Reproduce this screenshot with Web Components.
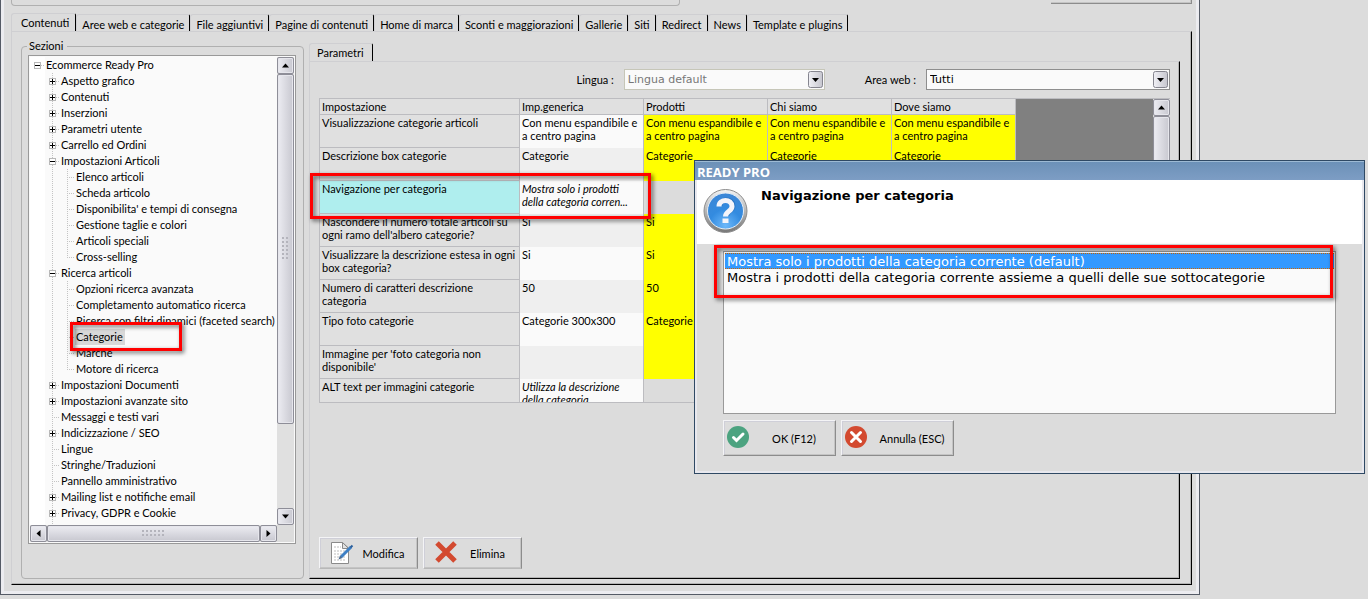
<!DOCTYPE html>
<html lang="it">
<head>
<meta charset="utf-8">
<title>Ready Pro</title>
<style>
html, body {
  margin: 0;
  height: 100%;
}
body {
  --face: #dcdcdc;
  --paper: #fafafa;
  --line: #999;
  --ui: Lato, "Noto Sans", sans-serif;
  --wide: "DejaVu Sans", sans-serif;
  background: var(--face);
  color: #000;
  font: 11px/16px var(--ui);
  overflow: hidden;
}
</style>
</head>
<body>
<ready-desktop></ready-desktop>
<script>
;(function(){
'use strict'

class BaseElement extends HTMLElement {
  constructor(){super()
    const t = document.createElement('template')
    t.innerHTML = '<style>*{box-sizing:border-box}</style>' + this.constructor.tpl
    this.attachShadow({mode: 'open'}).appendChild(t.content)
  }
  $(s){
    return this.shadowRoot.querySelector(s)
  }
}

/* scroll bar: vertical unless it has the horizontal attribute, --thumb is the thumb's length */
class ScrollBar extends BaseElement {
  static tpl = `
<style>
:host {
  display: flex;
  flex-direction: column;
  width: 17px;
  background: #e0e0e0;
}
:host([horizontal]) {
  flex-direction: row;
  width: auto;
  height: 17px;
}
button, .thumb {
  border: 1px solid #8e8e98;
  border-radius: 2px;
  background: linear-gradient(90deg, #ececf2, #c8c8d0);
  box-shadow: inset 0 0 0 1px #e6e6ec;
}
:host([horizontal]) button, :host([horizontal]) .thumb {
  background: linear-gradient(#ececf2, #c8c8d0);
}
button {
  flex: none;
  width: 17px;
  height: 17px;
  padding: 0;
  display: grid;
  place-items: center;
}
button svg {
  width: 7px;
  height: 7px;
}
.end svg {
  transform: rotate(180deg);
}
:host([horizontal]) .start svg {
  transform: rotate(-90deg);
}
:host([horizontal]) .end svg {
  transform: rotate(90deg);
}
.thumb {
  flex: 0 0 var(--thumb, 60%);
  display: grid;
  place-items: center;
}
.grip {
  width: 8px;
  height: 24px;
  background: radial-gradient(circle at 1px 1px, #b4b4bc 1px, #0000 1px) 0 0 / 4px 4px;
}
:host([horizontal]) .grip {
  width: 24px;
  height: 8px;
}
.track {
  flex: 1;
}
</style>
<button class="start" tabindex="-1" aria-label="Indietro"><svg viewBox="0 0 7 7"><path d="M3.5 1.5 7 5.5H0z"/></svg></button>
<div class="thumb"><div class="grip"></div></div>
<div class="track"></div>
<button class="end" tabindex="-1" aria-label="Avanti"><svg viewBox="0 0 7 7"><path d="M3.5 1.5 7 5.5H0z"/></svg></button>
`
}
customElements.define('scroll-bar', ScrollBar)

/* bevelled button with the icon in slot=icon */
class PushButton extends BaseElement {
  static tpl = `
<style>
:host {
  display: block;
}
button {
  display: flex;
  align-items: center;
  width: 100%;
  height: 100%;
  padding: 0 4px 0 10px;
  font: inherit;
  color: inherit;
  background: var(--face);
  border: 1px solid;
  border-color: #f4f4f6 #8c8c8c #b8b8b8 #f4f4f6;
  box-shadow: inset -1px -1px #c4c4c4, inset 1px 1px #cfcfd8;
}
.text {
  flex: 1;
  padding-top: 2px;
  text-align: center;
}
:host([raised]) button {
  padding: 0 4px 3px 3px;
  border-bottom-color: #8c8c8c;
}
:host([raised]) .text {
  padding: 4px 0 0 8px;
}
</style>
<button type="button"><slot name="icon"></slot><span class="text"><slot></slot></span></button>
`
}
customElements.define('push-button', PushButton)

class ComboBox extends BaseElement {
  static tpl = `
<style>
:host {
  display: flex;
  align-items: center;
  gap: 10px;
}
.box {
  display: grid;
  grid-template-columns: 1fr 16px;
  align-items: center;
  width: var(--box);
  height: 21px;
  border: 1px solid #8e8e8e;
  background: var(--paper);
}
select {
  grid-area: 1 / 1 / 2 / 3;
  appearance: none;
  width: 100%;
  height: 19px;
  padding: 1px 20px 0 3px;
  border: 0;
  background: none;
  font: 11px/16px var(--wide);
  color: #000;
  opacity: 1;
}
.arrow {
  grid-area: 1 / 2 / 2 / 3;
  width: 16px;
  height: 17px;
  pointer-events: none;
}
:host([disabled]) .box {
  border-color: #c6c6b8;
}
:host([disabled]) select {
  color: #777;
}
</style>
<label for="sel"></label>
<div class="box">
  <select id="sel"></select>
  <svg class="arrow" viewBox="0 0 16 17">
    <defs><linearGradient id="g" x2="1"><stop stop-color="#f0f0f5"/><stop offset="1" stop-color="#c6c6ce"/></linearGradient></defs>
    <rect x=".5" y=".5" width="14" height="16" rx="2" fill="url(#g)" stroke="#85858f"/>
    <path d="M4 7h7l-3.500 4z"/>
  </svg>
</div>
`
  connectedCallback(){
    this.$('label').textContent = this.getAttribute('label')
    const s = this.$('select')
    s.disabled = this.hasAttribute('disabled')
    s.appendChild(new Option(this.getAttribute('value')))
  }
}
customElements.define('combo-box', ComboBox)

class TabStrip extends BaseElement {
  static tpl = `
<style>
:host {
  display: flex;
  align-items: flex-end;
}
button {
  flex: none;
  height: 17px;
  margin: 0;
  padding: 2px 5px 0;
  border: 1px solid #cfcfd2;
  border-right-color: #000;
  border-bottom: 0;
  border-radius: 3px 2px 0 0;
  background: var(--face);
  font: inherit;
  color: inherit;
  white-space: nowrap;
}
button[aria-selected=true] {
  height: 19px;
  margin-bottom: -1px;
  padding: 0 6px 0 9px;
}
:host([single]) button[aria-selected=true] {
  padding: 0 8px 0 7px;
}
</style>
`
  connectedCallback(){
    this.setAttribute('role', 'tablist')
    this.getAttribute('tabs').split('|').forEach((name, i)=>{
      const b = document.createElement('button')
      b.setAttribute('role', 'tab')
      b.setAttribute('aria-selected', i == 0)
      b.textContent = name
      b.onclick = ()=>{
        this.$('[aria-selected=true]').setAttribute('aria-selected', false)
        b.setAttribute('aria-selected', true)
      }
      this.shadowRoot.appendChild(b)
    })
  }
}
customElements.define('tab-strip', TabStrip)

/* one row of the tree, its children go in the default slot */
class TreeItem extends BaseElement {
  static tpl = `
<style>
:host {
  display: block;
  background: repeating-linear-gradient(#c4c4c4 0 1px, #0000 1px 2px) 3px 0 / 1px 100% no-repeat;
}
:host(:last-child) {
  background-size: 1px 8px;
}
:host([root]) {
  background: none;
}
.row {
  display: flex;
  align-items: center;
  height: 16px;
  background: repeating-linear-gradient(90deg, #c4c4c4 0 1px, #0000 1px 2px) 3px 8px / 8px 1px no-repeat;
}
button {
  flex: none;
  width: 7px;
  height: 7px;
  padding: 0;
  border: 0;
  background: none;
}
svg {
  display: block;
}
.text {
  margin-left: 4px;
  padding: 0 2px 0 1px;
  white-space: nowrap;
}
:host([selected]) .text {
  background: #d8d8d8;
}
.children {
  margin-left: 15px;
}
:host(:not([toggle])) svg, :host([open]) .plus {
  display: none;
}
:host([toggle]:not([open])) .children {
  display: none;
}
</style>
<div class="row">
  <button tabindex="-1" aria-label="Espandi"><svg width="7" height="7" viewBox="0 0 7 7" shape-rendering="crispEdges">
    <path fill="#fff" stroke="#b8b8b8" d="M.5.5h6v6h-6z"/><path d="M1 3h5v1H1z"/><path class="plus" d="M3 1h1v5H3z"/>
  </svg></button>
  <span class="text"></span>
</div>
<div class="children"><slot></slot></div>
`
  connectedCallback(){
    this.$('.text').textContent = this.getAttribute('label')
    this.$('button').onclick = ()=>this.toggleAttribute('open')
  }
}
customElements.define('tree-item', TreeItem)

class SectionTree extends BaseElement {
  static tpl = `
<style>
:host {
  display: flex;
  min-height: 0;
}
fieldset {
  flex: 1;
  display: flex;
  min-width: 0;
  margin: 0;
  padding: 2px 7px 34px 6px;
  border: 1px solid #b0b0b0;
  border-radius: 4px;
}
legend {
  margin-left: -1px;
  padding: 0 4px 0 2px;
  line-height: 14px;
}
.list {
  flex: 1;
  display: grid;
  grid-template: minmax(0, 1fr) 17px / minmax(0, 1fr) 17px;
  padding: 1px;
  border: 1px solid var(--line);
  background: var(--paper);
}
.view {
  overflow: hidden;
  padding-left: 4px;
  background: linear-gradient(90deg, #fff 15px, var(--paper) 15px);
}
.v {
  --thumb: 350px;
}
.h {
  --thumb: 213px;
}
.corner {
  background: var(--face);
}
</style>
<fieldset>
  <legend>Sezioni</legend>
  <div class="list">
    <div class="view">
      <tree-item root toggle open label="Ecommerce Ready Pro">
        <tree-item toggle label="Aspetto grafico"></tree-item>
        <tree-item toggle label="Contenuti"></tree-item>
        <tree-item toggle label="Inserzioni"></tree-item>
        <tree-item toggle label="Parametri utente"></tree-item>
        <tree-item toggle label="Carrello ed Ordini"></tree-item>
        <tree-item toggle open label="Impostazioni Articoli">
          <tree-item label="Elenco articoli"></tree-item>
          <tree-item label="Scheda articolo"></tree-item>
          <tree-item label="Disponibilita' e tempi di consegna"></tree-item>
          <tree-item label="Gestione taglie e colori"></tree-item>
          <tree-item label="Articoli speciali"></tree-item>
          <tree-item label="Cross-selling"></tree-item>
        </tree-item>
        <tree-item toggle open label="Ricerca articoli">
          <tree-item label="Opzioni ricerca avanzata"></tree-item>
          <tree-item label="Completamento automatico ricerca"></tree-item>
          <tree-item label="Ricerca con filtri dinamici (faceted search)"></tree-item>
          <tree-item selected label="Categorie"></tree-item>
          <tree-item label="Marche"></tree-item>
          <tree-item label="Motore di ricerca"></tree-item>
        </tree-item>
        <tree-item toggle label="Impostazioni Documenti"></tree-item>
        <tree-item toggle label="Impostazioni avanzate sito"></tree-item>
        <tree-item label="Messaggi e testi vari"></tree-item>
        <tree-item toggle label="Indicizzazione / SEO"></tree-item>
        <tree-item label="Lingue"></tree-item>
        <tree-item label="Stringhe/Traduzioni"></tree-item>
        <tree-item label="Pannello amministrativo"></tree-item>
        <tree-item toggle label="Mailing list e notifiche email"></tree-item>
        <tree-item toggle label="Privacy, GDPR e Cookie"></tree-item>
        <tree-item></tree-item>
      </tree-item>
    </div>
    <scroll-bar class="v"></scroll-bar>
    <scroll-bar class="h" horizontal></scroll-bar>
    <div class="corner"></div>
  </div>
</fieldset>
`
}
customElements.define('section-tree', SectionTree)

class SettingsGrid extends BaseElement {
  static tpl = `
<style>
:host {
  display: flex;
  height: 305px;
  overflow: hidden;
  border: 1px solid #bcbcc0;
  border-right: 0;
}
table {
  flex: none;
  table-layout: fixed;
  width: 696px;
  height: max-content;
  border-collapse: separate;
  border-spacing: 0;
}
.name {
  width: 200px;
}
th, td {
  height: 33px;
  padding: 1px 0 0 2px;
  border-right: 1px solid #bcbcc0;
  font-weight: normal;
  line-height: 13px;
  text-align: left;
  vertical-align: top;
  overflow: hidden;
}
thead th {
  height: 16px;
  background: #e0e0e0;
  border-bottom: 1px solid #bcbcc0;
}
tbody th {
  background: #e0e0e0;
  border-bottom: 1px solid #bcbcc0;
}
td {
  background: #efefef;
}
tr:nth-child(odd) td {
  background: var(--paper);
}
tbody tr td.own {
  background: #ff0;
}
tbody tr td.off {
  background: var(--face);
}
.current th {
  background: #afeeee;
}
.default {
  font-style: italic;
}
.rest {
  flex: 1;
  background: #808080;
}
scroll-bar {
  --thumb: 160px;
}
</style>
<table>
  <colgroup><col class="name"><col><col><col><col></colgroup>
  <thead><tr></tr></thead>
  <tbody></tbody>
</table>
<div class="rest"></div>
<scroll-bar></scroll-bar>
`
  static heads = ['Impostazione', 'Imp.generica', 'Prodotti', 'Chi siamo', 'Dove siamo']
  // name, generic value, area value (null: the area follows the generic one)
  static rows = [
    ['Visualizzazione categorie articoli', 'Con menu espandibile e a centro pagina', 'Con menu espandibile e a centro pagina'],
    ['Descrizione box categorie', 'Categorie', 'Categorie'],
    ['Navigazione per categoria', 'Mostra solo i prodotti della categoria corren...', null],
    ["Nascondere il numero totale articoli su ogni ramo dell'albero categorie?", 'Si', 'Si'],
    ['Visualizzare la descrizione estesa in ogni box categoria?', 'Si', 'Si'],
    ['Numero di caratteri descrizione categoria', '50', '50'],
    ['Tipo foto categorie', 'Categorie 300x300', 'Categorie'],
    ["Immagine per 'foto categoria non disponibile'", '', ''],
    ['ALT text per immagini categorie', 'Utilizza la descrizione della categoria', null]
  ]
  connectedCallback(){
    const cell = (row, tag, text, cls)=>{
      const c = document.createElement(tag)
      c.textContent = text
      if(cls) c.className = cls
      row.appendChild(c)
    }
    SettingsGrid.heads.forEach(h=>cell(this.$('thead tr'), 'th', h))
    SettingsGrid.rows.forEach(([name, generic, area], i)=>{
      const tr = document.createElement('tr')
      if(i == 2) tr.className = 'current'
      cell(tr, 'th', name)
      cell(tr, 'td', generic, area === null ? 'default' : '')
      for(let n = 0; n < 3; n++){
        cell(tr, 'td', area ?? '', area === null ? 'off' : 'own')
      }
      this.$('tbody').appendChild(tr)
    })
  }
}
customElements.define('settings-grid', SettingsGrid)

class ParamPanel extends BaseElement {
  static tpl = `
<style>
:host {
  display: flex;
  flex-direction: column;
  min-width: 0;
}
.panel {
  flex: 1;
  display: flex;
  flex-direction: column;
  padding: 7px 9px 9px;
  border: 1px solid #cfcfd2;
  border-right-color: #000;
  border-bottom-color: #000;
  box-shadow: inset -1px -1px #b4b4b4;
}
.filters {
  display: flex;
  justify-content: flex-end;
  gap: 40px;
  margin-bottom: 8px;
}
.lang {
  --box: 201px;
}
.area {
  --box: 244px;
}
.actions {
  display: flex;
  gap: 5px;
  margin-top: auto;
}
push-button {
  width: 99px;
  height: 32px;
}
</style>
<tab-strip single tabs="Parametri"></tab-strip>
<div class="panel">
  <div class="filters">
    <combo-box class="lang" disabled label="Lingua :" value="Lingua default"></combo-box>
    <combo-box class="area" label="Area web :" value="Tutti"></combo-box>
  </div>
  <settings-grid></settings-grid>
  <div class="actions">
    <push-button>
      <svg slot="icon" width="24" height="24" viewBox="0 0 24 24">
        <path fill="#fff" stroke="#8a8a8a" d="M1.500 1.500h11l6 5.500v15.500h-17z"/>
        <path fill="#e2e2e2" stroke="#8a8a8a" d="M12.500 1.500v6h6z"/>
        <path stroke="#dedede" stroke-width="2" stroke-dasharray="2 1" d="M4 6h7M4 10h12M4 13h12M4 16h12M4 19h12"/>
        <path stroke="#3d7fc4" stroke-width="3" d="M11 16 21 6"/>
        <path stroke="#2a5f9c" stroke-width="2" d="M20.500 6.500 22.500 4.500"/>
        <path fill="#4a6a90" d="M8.500 18.500 10 14.500l2.500 2.500z"/>
      </svg>
      Modifica
    </push-button>
    <push-button>
      <svg slot="icon" width="24" height="24" viewBox="0 0 24 24">
        <path stroke="#d34a30" stroke-width="5" d="M3 2 21 20M21 2 3 20"/>
      </svg>
      Elimina
    </push-button>
  </div>
</div>
`
}
customElements.define('param-panel', ParamPanel)

class MainWindow extends BaseElement {
  static tpl = `
<style>
:host {
  display: flex;
  flex-direction: column;
  padding: 0 7px 9px 10px;
  border: solid #555b66;
  border-width: 0 1px 1px;
  box-shadow: inset 3px 0 #ececf0, inset -3px -3px #ececf0;
}
.top {
  display: flex;
  justify-content: space-between;
  align-items: flex-start;
  margin-bottom: 7px;
}
.group {
  width: 669px;
  height: 6px;
  border: 1px solid #b0b0b0;
  border-top: 0;
  border-radius: 0 0 4px 4px;
}
.edge {
  width: 141px;
  height: 4px;
  border: 1px solid #8c8c8c;
  border-width: 0 1px 1px 0;
  box-shadow: inset -1px -1px #c4c4c4;
}
.page {
  flex: 1;
  display: flex;
  gap: 5px;
  min-height: 0;
  padding: 11px 11px 5px 9px;
  border: 1px solid #cfcfd2;
  border-right-color: #000;
  border-bottom-color: #000;
  box-shadow: inset -1px -1px #b4b4b4;
}
section-tree {
  flex: 0 0 283px;
  margin-top: -4px;
}
param-panel {
  flex: 1;
}
</style>
<div class="top"><div class="group"></div><div class="edge"></div></div>
<tab-strip tabs="Contenuti|Aree web e categorie|File aggiuntivi|Pagine di contenuti|Home di marca|Sconti e maggiorazioni|Gallerie|Siti|Redirect|News|Template e plugins"></tab-strip>
<div class="page">
  <section-tree></section-tree>
  <param-panel></param-panel>
</div>
`
}
customElements.define('main-window', MainWindow)

/* red frame drawn over the part it points at */
class RedFrame extends BaseElement {
  static tpl = `
<style>
:host {
  display: block;
  box-sizing: border-box;
  border: 3px solid #f00;
  filter: drop-shadow(2px 2px 2px rgba(0, 0, 0, .6));
  pointer-events: none;
}
</style>
`
}
customElements.define('red-frame', RedFrame)

class ChoiceDialog extends BaseElement {
  static tpl = `
<style>
:host {
  display: flex;
  flex-direction: column;
  box-sizing: border-box;
  border: 1px solid #2f4964;
  background: var(--face);
}
.title {
  height: 19px;
  padding-left: 2px;
  border-top: 1px solid #9dbad4;
  background: linear-gradient(#6c91b8, #7d9dc4);
  color: #fff;
  font: bold 13px/20px "Open Sans", sans-serif;
}
.inner {
  flex: 1;
  display: flex;
  flex-direction: column;
  border: 2px solid #e8e8ee;
  border-top: 0;
}
.head {
  display: flex;
  gap: 13px;
  height: 64px;
  padding: 8px 0 0 6px;
  background: #fff;
}
h1 {
  margin: 0;
  font: bold 13px/16px var(--wide);
}
.body {
  flex: 1;
  display: flex;
  flex-direction: column;
  padding: 7px 26px 15px;
}
ul {
  flex: 1;
  margin: 0 0 6px;
  padding: 1px;
  border: 1px solid var(--line);
  background: var(--paper);
  list-style: none;
  font: 13px/16px var(--wide);
}
li {
  padding: 2px 0 0 2px;
  border: solid #0000;
  border-width: 1px 0;
  line-height: 12px;
}
li[aria-selected=true] {
  background: #39f;
  border: dotted #c60;
  border-width: 1px 0;
  color: #fff;
}
.buttons {
  display: flex;
  gap: 5px;
}
push-button {
  width: 113px;
  height: 36px;
}
red-frame {
  position: absolute;
  top: 84px;
  left: 19px;
  right: 31px;
  height: 53px;
}
</style>
<div class="title">READY PRO</div>
<div class="inner">
  <div class="head">
    <svg width="45" height="45" viewBox="0 0 45 45">
      <defs>
        <linearGradient id="ring" x2="0" y2="1"><stop stop-color="#f4f4f4"/><stop offset="1" stop-color="#777"/></linearGradient>
        <radialGradient id="ball" cx=".5" cy=".9" r=".9"><stop stop-color="#6cb8fa"/><stop offset=".5" stop-color="#338be0"/><stop offset="1" stop-color="#3c86d6"/></radialGradient>
      </defs>
      <circle cx="22.500" cy="23" r="21.500" fill="url(#ring)" stroke="#8c8c8c"/>
      <circle cx="22.500" cy="23" r="18" fill="url(#ball)" stroke="#e6eef6"/>
      <path fill="none" stroke="#1d62ae" stroke-opacity=".5" stroke-width="5" d="M17 18c0-8 13-8 13 0 0 5-6 4-6 10"/>
      <path fill="none" stroke="#f4f4fa" stroke-width="5" d="M16 18.500c0-8 13-8 13 0 0 5-6.500 4.500-6.500 10"/>
      <path fill="#f4f4fa" d="M19.500 30.500h6v4.500h-6z"/>
    </svg>
    <h1>Navigazione per categoria</h1>
  </div>
  <div class="body">
    <ul role="listbox" aria-label="Navigazione per categoria" tabindex="0">
      <li role="option" aria-selected="true">Mostra solo i prodotti della categoria corrente (default)</li>
      <li role="option" aria-selected="false">Mostra i prodotti della categoria corrente assieme a quelli delle sue sottocategorie</li>
    </ul>
    <div class="buttons">
      <push-button raised>
        <svg slot="icon" width="22" height="22" viewBox="0 0 22 22">
          <circle cx="11" cy="11" r="11" fill="#4ca380"/>
          <path fill="none" stroke="#fff" stroke-width="3" stroke-linecap="round" d="M6.500 11.500 9.500 14.500 16 8"/>
        </svg>
        OK (F12)
      </push-button>
      <push-button raised>
        <svg slot="icon" width="22" height="22" viewBox="0 0 22 22">
          <circle cx="11" cy="11" r="11" fill="#d34a30"/>
          <path stroke="#fff" stroke-width="3" stroke-linecap="round" d="M6.500 6.500l9 9M15.500 6.500l-9 9"/>
        </svg>
        Annulla (ESC)
      </push-button>
    </div>
  </div>
</div>
<red-frame></red-frame>
`
  connectedCallback(){
    const items = this.shadowRoot.querySelectorAll('li')
    items.forEach(li=>li.onclick = ()=>{
      items.forEach(d=>d.setAttribute('aria-selected', d == li))
    })
  }
}
customElements.define('choice-dialog', ChoiceDialog)

class ReadyDesktop extends BaseElement {
  static tpl = `
<style>
:host {
  position: relative;
  display: flex;
  flex-direction: column;
  height: 100vh;
}
main-window {
  flex: 1;
  min-height: 0;
  margin: 0 168px 4px 0;
}
choice-dialog {
  position: absolute;
  top: 160px;
  left: 694px;
  right: 3px;
  height: 314px;
}
red-frame {
  position: absolute;
}
.setting {
  top: 173px;
  left: 310px;
  width: 341px;
  height: 46px;
}
.section {
  top: 322px;
  left: 70px;
  width: 112px;
  height: 29px;
}
</style>
<main-window></main-window>
<choice-dialog></choice-dialog>
<red-frame class="setting"></red-frame>
<red-frame class="section"></red-frame>
`
}
customElements.define('ready-desktop', ReadyDesktop)

})();
</script>
</body>
</html>
